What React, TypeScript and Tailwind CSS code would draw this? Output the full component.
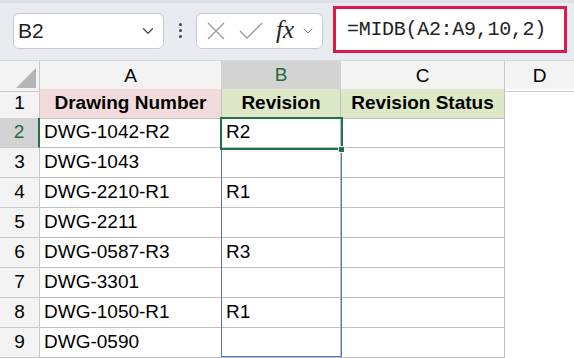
import { ChevronDown } from 'lucide-react'

const rows: [string, string][] = [
  ['DWG-1042-R2', 'R2'],
  ['DWG-1043', ''],
  ['DWG-2210-R1', 'R1'],
  ['DWG-2211', ''],
  ['DWG-0587-R3', 'R3'],
  ['DWG-3301', ''],
  ['DWG-1050-R1', 'R1'],
  ['DWG-0590', ''],
]

const cols = 'grid grid-cols-[40px_182px_119px_164px_1fr]'

export default function App() {
  return (
    <div className="w-[574px] h-[358px] overflow-hidden bg-white text-black font-['Liberation_Sans',Arial,sans-serif]">
      {/* Formula bar */}
      <div className="h-[60px] bg-[#e8ebef] flex items-center pl-[13px] pr-[7px] gap-0 border-t-[3px] border-[#dde0e4]">
        <div className="w-[151px] h-[36px] mt-[-2px] bg-white border border-[#c9cbce] rounded-[6px] flex items-center justify-between pl-[4px] pr-[6px]">
          <span className="text-[21px] text-[#222]">B2</span>
          <ChevronDown className="w-[18px] h-[18px] text-[#444]" strokeWidth={1.6} />
        </div>
        <div className="w-[32px] flex flex-col items-center gap-[3px] mt-[-2px]">
          <span className="w-[3px] h-[3px] bg-[#444] rounded-full" />
          <span className="w-[3px] h-[3px] bg-[#444] rounded-full" />
          <span className="w-[3px] h-[3px] bg-[#444] rounded-full" />
        </div>
        <div className="w-[127px] h-[36px] mt-[-2px] bg-white border border-[#c9cbce] rounded-[6px] flex items-center pl-[10px] pr-[3px]">
          <svg width="18" height="18" viewBox="0 0 18 18" className="text-[#9a9a9a]">
            <path d="M1 1 L17 17 M17 1 L1 17" stroke="currentColor" strokeWidth="1.3" fill="none" />
          </svg>
          <svg width="24" height="18" viewBox="0 0 24 18" className="ml-[14px] text-[#9a9a9a]">
            <path d="M1 9 L8 16 L23 1" stroke="currentColor" strokeWidth="1.3" fill="none" />
          </svg>
          <span className="ml-[13px] text-[25px] leading-none italic font-['Liberation_Serif',serif] text-[#222] mt-[-3px]">fx</span>
          <ChevronDown className="ml-[6px] w-[16px] h-[16px] text-[#777]" strokeWidth={1.5} />
        </div>
        <div className="ml-[10px] flex-1 h-[47px] mt-[-4px] border-[3px] border-[#e0184b] bg-white flex items-center pl-[11px]">
          <span className="text-[20px] font-['Liberation_Mono',monospace] text-[#222] tracking-[-0.3px]">=MIDB(A2:A9,10,2)</span>
        </div>
      </div>

      {/* Sheet */}
      <div className="relative">
        {/* column headers */}
        <div className={`${cols} h-[29px] bg-[#f3f3f3] text-[19px]`}>
          <div className="relative border-r border-b border-[#c8c8c8] border-t border-t-[#d8d8d8]">
            <svg width="20" height="20" viewBox="0 0 20 20" className="absolute right-[3px] bottom-[3px]">
              <path d="M20 0 L20 20 L0 20 Z" fill="#b4b4b4" />
            </svg>
          </div>
          <div className="flex items-center justify-center border-r border-b border-[#d0d0d0] border-t border-t-[#d8d8d8]">A</div>
          <div className="flex items-center justify-center bg-[#d3d3d3] text-[#1e6b3e] border-r border-[#d0d0d0] border-b-[2px] border-b-[#217346] border-t border-t-[#d8d8d8]">B</div>
          <div className="flex items-center justify-center border-r border-b border-[#c8c8c8] border-t border-t-[#d8d8d8]">C</div>
          <div className="flex items-center justify-center border-b border-[#d0d0d0] border-t border-t-[#d8d8d8]">D</div>
        </div>

        {/* row 1 */}
        <div className={`${cols} h-[29px] text-[19px]`}>
          <div className="flex items-center justify-center bg-[#f3f3f3] border-r border-b border-[#c8c8c8]">1</div>
          <div className="flex items-center justify-center font-bold bg-[#f2dcdb] border-r border-b border-[#bfbfbf]">Drawing Number</div>
          <div className="flex items-center justify-center font-bold bg-[#dde8c6] border-r border-b border-[#bfbfbf]">Revision</div>
          <div className="flex items-center justify-center font-bold bg-[#dde8c6] border-r border-b border-[#bfbfbf]">Revision Status</div>
          <div />
        </div>

        {rows.map(([a, b], i) => {
          const active = i === 0
          return (
            <div key={i} className={`${cols} h-[30px] text-[19px]`}>
              <div
                className={`flex items-center justify-center border-b border-[#c8c8c8] ${
                  active ? 'bg-[#d3d3d3] text-[#1e6b3e] border-r-[2px] border-r-[#217346]' : 'bg-[#f3f3f3] border-r'
                }`}
              >
                {i + 2}
              </div>
              <div className="flex items-center pl-[4px] border-r border-b border-[#bfbfbf]">{a}</div>
              <div className="flex items-center pl-[4px] border-r border-b border-[#bfbfbf]">{b}</div>
              <div className="border-r border-b border-[#bfbfbf]" />
              <div />
            </div>
          )
        })}

        {/* spill range outline B2:B9 */}
        <div className="absolute left-[221px] top-[58px] w-[121px] h-[239px] border-[1.5px] border-[#4a78c2] pointer-events-none" />
        {/* active cell B2 */}
        <div className="absolute left-[220px] top-[57px] w-[123px] h-[33px] border-[2px] border-[#217346] pointer-events-none" />
        <div className="absolute left-[338px] top-[86px] w-[7px] h-[7px] bg-[#217346] border border-white pointer-events-none" />
      </div>
    </div>
  )
}
